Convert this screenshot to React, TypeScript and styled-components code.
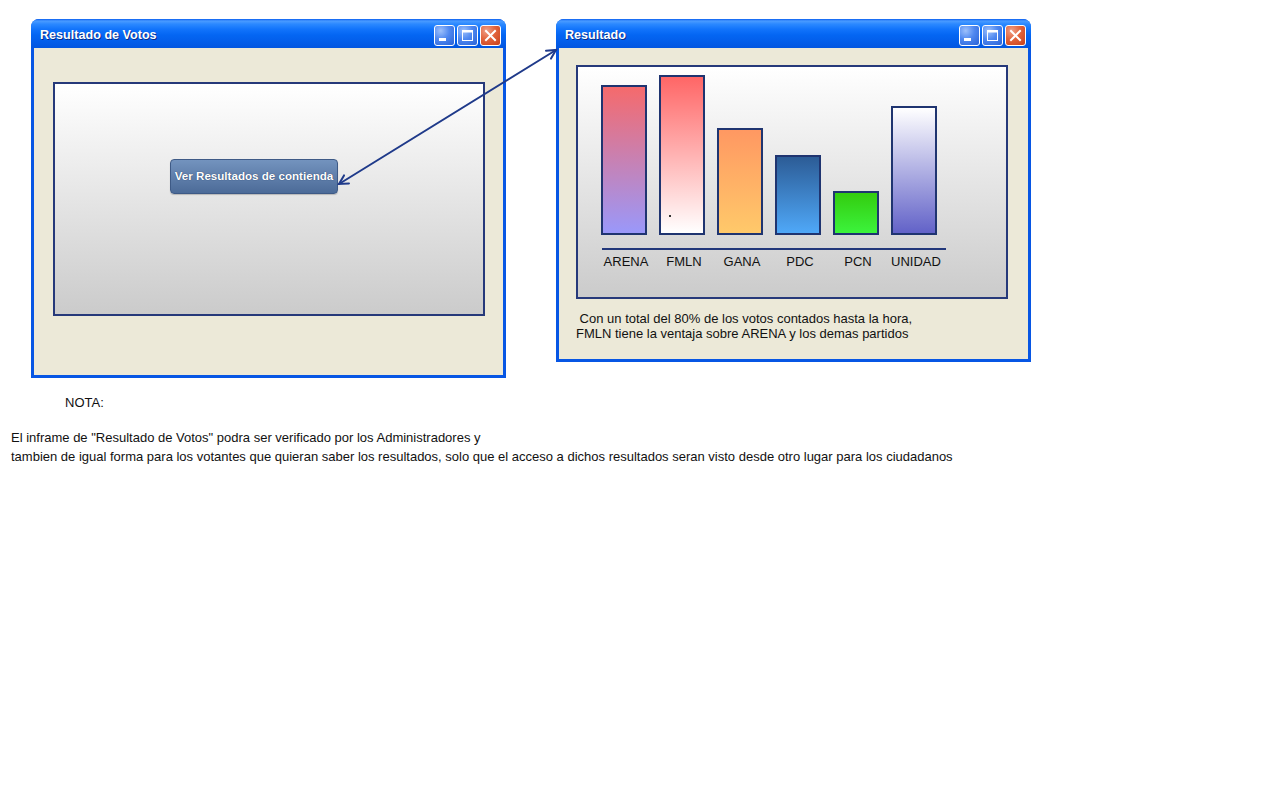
import styled, { createGlobalStyle } from 'styled-components';

const GlobalStyle = createGlobalStyle`
  body {
    margin: 0;
    background: #ffffff;
    font-family: 'Liberation Sans', Arial, sans-serif;
    color: #000;
  }
`;

type Party = { name: string; height: number; from: string; to: string; dot?: boolean };

const parties: Party[] = [
  { name: 'ARENA', height: 150, from: '#f56a6c', to: '#9a98fa' },
  { name: 'FMLN', height: 160, from: '#ff6666', to: '#ffffff', dot: true },
  { name: 'GANA', height: 107, from: '#ff9862', to: '#ffc96a' },
  { name: 'PDC', height: 80, from: '#2c5c96', to: '#4fa8f8' },
  { name: 'PCN', height: 44, from: '#33cc0f', to: '#3cf33c' },
  { name: 'UNIDAD', height: 129, from: '#ffffff', to: '#6262c8' },
];

const Desktop = styled.div`
  position: relative;
  width: 1280px;
  height: 385px;
`;

const Window = styled.div<{ $left: number; $top: number; $height: number }>`
  position: absolute;
  left: ${(p) => p.$left}px;
  top: ${(p) => p.$top}px;
  width: 475px;
  height: ${(p) => p.$height}px;
  box-sizing: border-box;
  display: flex;
  flex-direction: column;
  background: #0756e4;
  border-radius: 8px 8px 0 0;
  padding: 0 3px 3px;
`;

const TitleBar = styled.div`
  height: 29px;
  box-sizing: border-box;
  margin: 0 -3px;
  padding: 3px 5px 0 9px;
  display: flex;
  align-items: center;
  border-radius: 8px 8px 0 0;
  background: linear-gradient(
    to bottom,
    #0a5ff0 0%,
    #4a9bff 7%,
    #2a88ff 18%,
    #1274fb 35%,
    #0466f3 55%,
    #035de9 80%,
    #0256e0 100%
  );
`;

const Title = styled.span`
  flex: 1;
  color: #ffffff;
  font-size: 12.6px;
  font-weight: bold;
  text-shadow: 1px 1px 0 #0a2d8a;
  padding-bottom: 1px;
`;

const Controls = styled.div`
  display: flex;
  gap: 2px;
`;

const CtrlButton = styled.div<{ $close?: boolean }>`
  width: 21px;
  height: 21px;
  box-sizing: border-box;
  border: 1px solid #ffffff;
  border-radius: 3px;
  display: flex;
  align-items: center;
  justify-content: center;
  background: ${(p) =>
    p.$close
      ? 'radial-gradient(circle at 30% 25%, #f0a088 0%, #e2643c 45%, #c7401a 100%)'
      : 'radial-gradient(circle at 30% 25%, #9dc0fb 0%, #4f88f0 45%, #2a62d6 100%)'};
`;

const Body = styled.div`
  flex: 1;
  background: #ece9d8;
  display: flex;
  flex-direction: column;
`;

const Panel = styled.div<{ $mt: number; $ml: number }>`
  margin: ${(p) => p.$mt}px 0 0 ${(p) => p.$ml}px;
  width: 432px;
  height: 234px;
  box-sizing: border-box;
  border: 2px solid #26397a;
  background: linear-gradient(to bottom, #ffffff, #cbcbcb);
  display: flex;
  flex-direction: column;
`;

const ActionButton = styled.button`
  margin: 75px 0 0 115px;
  width: 168px;
  height: 35px;
  border: 1px solid #3e5a86;
  border-radius: 4px;
  background: linear-gradient(to bottom, #7393be, #4c6b98);
  color: #ffffff;
  font-family: 'Liberation Sans', Arial, sans-serif;
  font-size: 11.6px;
  font-weight: bold;
  text-shadow: 0 0 1px #1d3358;
  padding: 0 0 2px;
  box-shadow: 0 1px 1px rgba(0, 0, 0, 0.2);
`;

const Columns = styled.div`
  display: grid;
  grid-template-columns: repeat(6, 58px);
  padding-left: 17px;
`;

const BarsRow = styled(Columns)`
  height: 168px;
  align-items: end;
`;

const LabelsRow = styled(Columns)`
  padding-left: 19px;
`;

const Bar = styled.div<{ $from: string; $to: string; $h: number; $dot?: boolean }>`
  position: relative;
  justify-self: center;
  width: 46px;
  height: ${(p) => p.$h}px;
  box-sizing: border-box;
  border: 2px solid #1f3470;
  background: linear-gradient(to bottom, ${(p) => p.$from}, ${(p) => p.$to});

  &::after {
    content: '';
    display: ${(p) => (p.$dot ? 'block' : 'none')};
    position: absolute;
    left: 8px;
    bottom: 16px;
    width: 2px;
    height: 2px;
    background: #333;
  }
`;

const Baseline = styled.div`
  margin: 13px 0 0 24px;
  width: 344px;
  height: 2px;
  background: #22377a;
`;

const Label = styled.div`
  justify-self: center;
  font-size: 13px;
  line-height: 14px;
  margin-top: 5px;
  color: #111;
`;

const Info = styled.p`
  margin: 12px 0 0 17px;
  font-size: 13px;
  line-height: 15px;
  color: #111;
`;

const Arrow = styled.svg`
  position: absolute;
  left: 0;
  top: 0;
  pointer-events: none;
`;

const Note = styled.section`
  padding-top: 8px;
  font-size: 13px;
  line-height: 19px;
  color: #111;
`;

const NoteTitle = styled.div`
  margin-left: 65px;
`;

const NoteText = styled.p`
  margin: 16px 0 0 11px;
`;

function WindowControls() {
  return (
    <Controls>
      <CtrlButton>
        <svg width="19" height="19" viewBox="0 0 19 19">
          <rect x="4" y="12" width="7" height="3" fill="#fff" />
        </svg>
      </CtrlButton>
      <CtrlButton>
        <svg width="19" height="19" viewBox="0 0 19 19">
          <rect x="4.5" y="4.5" width="10" height="10" fill="none" stroke="#fff" strokeWidth="1" />
          <rect x="4" y="4" width="11" height="2.5" fill="#fff" />
        </svg>
      </CtrlButton>
      <CtrlButton $close>
        <svg width="19" height="19" viewBox="0 0 19 19">
          <path d="M5 5 L14 14 M14 5 L5 14" stroke="#fff" strokeWidth="2" strokeLinecap="square" />
        </svg>
      </CtrlButton>
    </Controls>
  );
}

export default function App() {
  return (
    <>
      <GlobalStyle />
      <Desktop>
        <Window $left={31} $top={19} $height={359}>
          <TitleBar>
            <Title>Resultado de Votos</Title>
            <WindowControls />
          </TitleBar>
          <Body>
            <Panel $mt={34} $ml={19}>
              <ActionButton>Ver Resultados de contienda</ActionButton>
            </Panel>
          </Body>
        </Window>

        <Window $left={556} $top={19} $height={343}>
          <TitleBar>
            <Title>Resultado</Title>
            <WindowControls />
          </TitleBar>
          <Body>
            <Panel $mt={17} $ml={17}>
              <BarsRow>
                {parties.map((p) => (
                  <Bar key={p.name} $from={p.from} $to={p.to} $h={p.height} $dot={p.dot} />
                ))}
              </BarsRow>
              <Baseline />
              <LabelsRow>
                {parties.map((p) => (
                  <Label key={p.name}>{p.name}</Label>
                ))}
              </LabelsRow>
            </Panel>
            <Info>
              &nbsp;Con un total del 80% de los votos contados hasta la hora,
              <br />
              FMLN tiene la ventaja sobre ARENA y los demas partidos
            </Info>
          </Body>
        </Window>

        <Arrow width="1280" height="385" viewBox="0 0 1280 385">
          <g stroke="#1f3a8a" strokeWidth="2" fill="none" strokeLinecap="round">
            <line x1="339" y1="184" x2="556" y2="50" />
            <polyline points="546,50.7 556,50 551,58.6" />
            <polyline points="349,183.4 339,184 344,175.4" />
          </g>
        </Arrow>
      </Desktop>

      <Note>
        <NoteTitle>NOTA:</NoteTitle>
        <NoteText>
          El inframe de "Resultado de Votos" podra ser verificado por los Administradores y
          <br />
          tambien de igual forma para los votantes que quieran saber los resultados, solo que el
          acceso a dichos resultados seran visto desde otro lugar para los ciudadanos
        </NoteText>
      </Note>
    </>
  );
}
